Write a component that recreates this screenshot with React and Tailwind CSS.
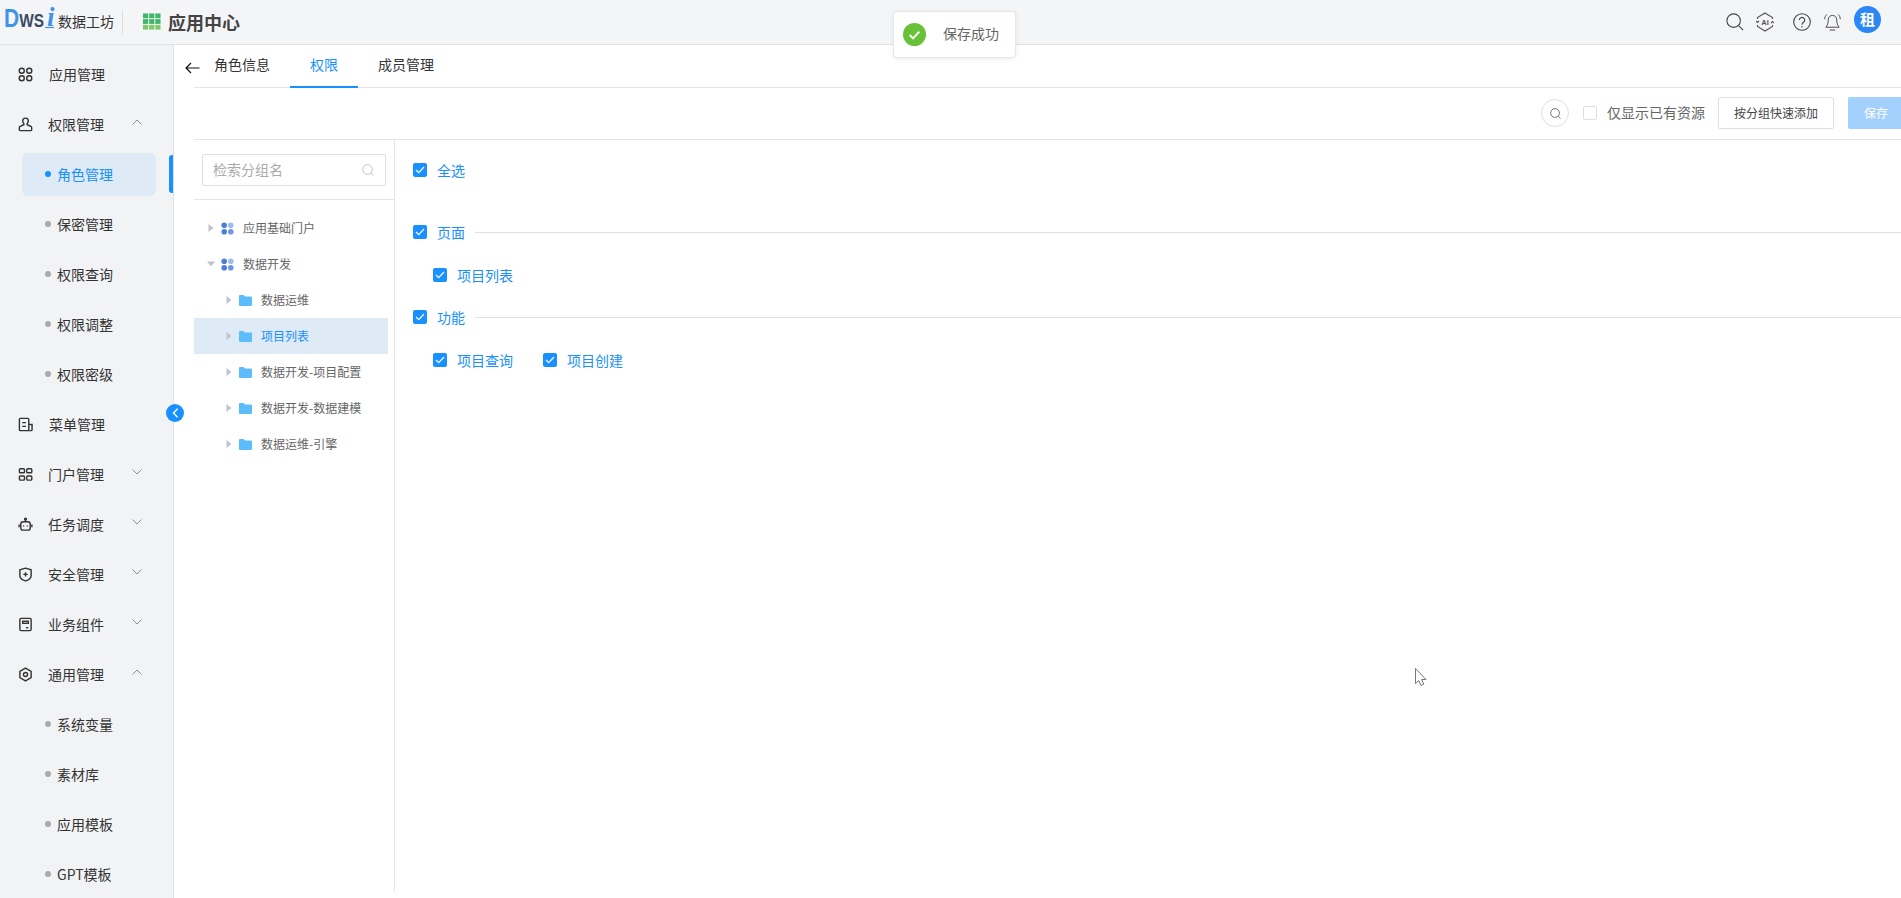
import React from "react";

const FONT = "font-['Noto_Sans_CJK_SC','Noto_Sans',sans-serif]";

const MENU_ICONS = {
  apps: (
    <>
      <circle cx="4" cy="4" r="2.7" />
      <circle cx="12" cy="4" r="2.7" />
      <circle cx="4" cy="12" r="2.7" />
      <circle cx="12" cy="12" r="2.7" />
    </>
  ),
  user: (
    <>
      <path d="M8 1.200a3 3 0 0 0-3 3c0 1.300.5 2 1.200 2.800v1.200L2.300 10c-.6.300-.9.800-.9 1.400v2.300a.8.8 0 0 0 .8.800h11.600a.8.800 0 0 0 .8-.8v-2.300c0-.6-.3-1.100-.9-1.400L9.800 8.200V7c.7-.8 1.200-1.500 1.200-2.800a3 3 0 0 0-3-3z" />
    </>
  ),
  menu: (
    <>
      <path d="M12 14.500H2.500a1 1 0 0 1-1-1v-11a1 1 0 0 1 1-1h8a1 1 0 0 1 1 1v12" />
      <path d="M11.500 8h3.500v5.500a1 1 0 0 1-1 1h-2" />
      <path d="M4.500 6h4M4.500 10h4" />
    </>
  ),
  portal: (
    <>
      <rect x="1.500" y="1.800" width="5.400" height="4.400" rx="1" />
      <rect x="9.300" y="1.800" width="5.400" height="4.400" rx="1" />
      <rect x="1.500" y="9.600" width="5.400" height="4.400" rx="1" />
      <rect x="9.300" y="9.600" width="5.400" height="4.400" rx="1" />
    </>
  ),
  robot: (
    <>
      <rect x="3" y="5" width="10" height="9" rx="2.400" />
      <circle cx="8" cy="2.200" r="1" />
      <path d="M8 3v2M1.200 8v3M14.800 8v3" />
      <path d="M6 9v1M10 9v1" />
    </>
  ),
  shield: (
    <>
      <path d="M8 1.200l6 1.800v6.200c0 2.800-3.600 4.800-6 5.600-2.400-.8-6-2.800-6-5.600V3z" />
      <path d="M8 5.600v4.600M5.700 7.900h4.600" />
    </>
  ),
  widget: (
    <>
      <rect x="2" y="1.500" width="12" height="13" rx="1.200" />
      <rect x="5" y="4.500" width="6" height="2.200" />
      <path d="M8.500 11.500H11" />
    </>
  ),
  gear: (
    <>
      <path d="M8 1.200l6 3.400v6.800l-6 3.400-6-3.400V4.600z" />
      <circle cx="8" cy="8" r="2.200" />
    </>
  ),
};

function MenuIcon({ name }) {
  return (
    <svg viewBox="0 0 16 16" fill="none" stroke="#333" strokeWidth="1.500" className="w-[15px] h-[15px] shrink-0">
      {MENU_ICONS[name]}
    </svg>
  );
}

function Chevron({ up }) {
  return (
    <svg viewBox="0 0 10 6" fill="none" stroke="#8a8f99" strokeWidth="1" className="w-[10px] h-[6px] shrink-0 mb-[4px]">
      <path d={up ? "M.5 5.500L5 1l4.500 4.500" : "M.5.500L5 5l4.500-4.500"} />
    </svg>
  );
}

function TopItem({ icon, label, chevron, wide }) {
  return (
    <div className="h-[50px] flex items-center pl-[18px]">
      <MenuIcon name={icon} />
      <span className={`text-[14px] text-[#333] ${wide ? "ml-[16px]" : "ml-[15px]"}`}>{label}</span>
      {chevron && (
        <span className="ml-[28px] flex">
          <Chevron up={chevron === "up"} />
        </span>
      )}
    </div>
  );
}

function SubItem({ label, active }) {
  if (active) {
    return (
      <div className="h-[50px] flex items-center relative">
        <div className="ml-[22px] w-[134px] h-[43px] rounded-[6px] bg-[#deeaf6] flex items-center pl-[23px]">
          <span className="w-[6px] h-[6px] rounded-full bg-[#1890ff] mr-[6px]"></span>
          <span className="text-[14px] text-[#1890ff]">{label}</span>
        </div>
        <div className="absolute left-[169px] top-[6px] w-[4px] h-[38px] rounded-l-[3px] bg-[#1890ff]"></div>
      </div>
    );
  }
  return (
    <div className="h-[50px] flex items-center pl-[45px]">
      <span className="w-[6px] h-[6px] rounded-full bg-[#a8aaae] mr-[6px]"></span>
      <span className="text-[14px] text-[#333]">{label}</span>
    </div>
  );
}

function Sidebar() {
  return (
    <aside className="w-[174px] shrink-0 bg-[#f2f3f5] border-r border-[#e0e1e4] pt-[4px] relative">
      <TopItem icon="apps" label="应用管理" wide />
      <TopItem icon="user" label="权限管理" chevron="up" />
      <SubItem label="角色管理" active />
      <SubItem label="保密管理" />
      <SubItem label="权限查询" />
      <SubItem label="权限调整" />
      <SubItem label="权限密级" />
      <TopItem icon="menu" label="菜单管理" wide />
      <TopItem icon="portal" label="门户管理" chevron="down" />
      <TopItem icon="robot" label="任务调度" chevron="down" />
      <TopItem icon="shield" label="安全管理" chevron="down" />
      <TopItem icon="widget" label="业务组件" chevron="down" />
      <TopItem icon="gear" label="通用管理" chevron="up" />
      <SubItem label="系统变量" />
      <SubItem label="素材库" />
      <SubItem label="应用模板" />
      <SubItem label="GPT模板" />
      <div className="absolute left-[166px] top-[359px] w-[18px] h-[18px] rounded-full bg-[#1890ff] flex items-center justify-center">
        <svg viewBox="0 0 8 12" fill="none" stroke="#fff" strokeWidth="1.600" className="w-[7px] h-[10px]">
          <path d="M6.500 1L1.500 6l5 5" />
        </svg>
      </div>
    </aside>
  );
}

function Logo() {
  return (
    <svg viewBox="0 0 54 44" className="w-[54px] h-[44px] shrink-0">
      <text x="0" y="27" fontWeight="700" fontFamily="Liberation Sans" textLength="40" lengthAdjust="spacingAndGlyphs">
        <tspan fontSize="26" fill="#3f94ea">D</tspan>
        <tspan fontSize="19" fill="#3c4a63">WS</tspan>
      </text>
      <text x="43" y="26" fontSize="27" fontStyle="italic" fontWeight="700" fontFamily="Liberation Serif" fill="#3f94ea">i</text>
      <path d="M41 27.500h9" stroke="#3f94ea" strokeWidth="1.200" />
    </svg>
  );
}

function Header() {
  return (
    <header className="h-[45px] shrink-0 bg-[#f4f5f7] border-b border-[#dfe0e3] flex items-center pl-[4px] pr-[20px]">
      <Logo />
      <span className="text-[14px] text-[#333] pb-[1px]">数据工坊</span>
      <span className="w-px h-[24px] bg-[#dddee1] ml-[8px]"></span>
      <svg viewBox="0 0 19 18" className="w-[18px] h-[18px] ml-[20px]">
        {[0, 6.500, 13].map((x) =>
          [0, 6, 12].map((y) => <rect key={`${x}-${y}`} x={x} y={y} width="5.500" height="5" fill={y === 12 ? "#7fc66d" : "#3fb56c"} />)
        )}
      </svg>
      <span className="text-[18px] font-bold text-[#444] ml-[7px]">应用中心</span>
      <div className="ml-auto flex items-center">
        <svg viewBox="0 0 20 20" fill="none" stroke="#444" strokeWidth="1.200" className="w-[18px] h-[18px]">
          <circle cx="8.500" cy="8.500" r="7.500" />
          <path d="M14 14l5 5" />
        </svg>
        <svg viewBox="0 0 18 20" fill="none" stroke="#555" strokeWidth="1.100" className="w-[18px] h-[20px] ml-[12px]">
          <path d="M1.500 7V5.500L9 1l7.500 4.500V7M1.500 13v1.500L9 19l7.500-4.500V13" />
          <path d="M0 9l1.500 1.500L3 9M15 11l1.500-1.500L18 11" />
          <text x="9" y="12.500" fontSize="7.500" fontWeight="700" textAnchor="middle" fill="#555" stroke="none" fontFamily="Liberation Sans">AI</text>
        </svg>
        <svg viewBox="0 0 18 18" fill="none" stroke="#444" strokeWidth="1.100" className="w-[18px] h-[18px] ml-[19px]">
          <circle cx="9" cy="9" r="8.300" />
          <path d="M6.300 7a2.700 2.700 0 1 1 4.200 2.300c-1 .7-1.500 1.200-1.500 2.400" />
          <path d="M9 13v1.300" />
        </svg>
        <svg viewBox="0 0 18 20" fill="none" stroke="#444" strokeWidth="1" className="w-[17px] h-[19px] ml-[13px]">
          <path d="M9 2.500a4.500 4.500 0 0 0-4.500 4.500c0 4-1 6-2.500 8h14c-1.500-2-2.500-4-2.500-8A4.500 4.500 0 0 0 9 2.500z" />
          <path d="M3 1.500C1.500 2.800.8 4.500.8 6.500M15 1.500c1.500 1.300 2.200 3 2.200 5M6 18h6" />
        </svg>
        <div className="w-[27px] h-[27px] rounded-full bg-[#2b86f6] text-white text-[15px] font-bold flex items-center justify-center ml-[13px] mb-[5px]">租</div>
      </div>
    </header>
  );
}

function Check({ className = "" }) {
  return (
    <span className={`w-[14px] h-[14px] rounded-[2px] bg-[#1890ff] flex items-center justify-center shrink-0 ${className}`}>
      <svg viewBox="0 0 10 8" fill="none" stroke="#fff" strokeWidth="1.200" className="w-[10px] h-[8px]">
        <path d="M1 4l2.700 2.700L9 1" />
      </svg>
    </span>
  );
}

function CheckRow({ label, indent, line, className = "" }) {
  return (
    <div className={`flex items-center ${indent ? "pl-[20px]" : ""} ${className}`}>
      <Check />
      <span className="text-[14px] text-[#1890ff] ml-[10px] leading-[20px] pb-[1px]">{label}</span>
      {line && <span className="flex-1 h-px bg-[#dfe0e4] ml-[10px]"></span>}
    </div>
  );
}

function Arrow({ down }) {
  return (
    <svg viewBox="0 0 8 8" className="w-[8px] h-[8px] shrink-0" fill="#c0c4cc">
      <path d={down ? "M0 1.500h8L4 6.500z" : "M1.500 0v8l5-4z"} />
    </svg>
  );
}

function GroupIcon() {
  return (
    <svg viewBox="0 0 13 13" className="w-[13px] h-[13px] shrink-0 ml-[6px]">
      <circle cx="3.200" cy="3.200" r="2.800" fill="#4d7fd6" />
      <circle cx="9.800" cy="3.200" r="2.800" fill="#9fbcf0" />
      <circle cx="3.200" cy="9.800" r="2.800" fill="#4d7fd6" />
      <circle cx="9.800" cy="9.800" r="2.800" fill="#6c97e6" />
    </svg>
  );
}

function FolderIcon() {
  return (
    <svg viewBox="0 0 13 11" className="w-[13px] h-[11px] shrink-0 ml-[6px]" fill="#5cbdfa">
      <path d="M0 1a1 1 0 0 1 1-1h3.500l1.500 1.500h6a1 1 0 0 1 1 1V10a1 1 0 0 1-1 1H1a1 1 0 0 1-1-1z" />
    </svg>
  );
}

function TreeRow({ label, level, open, selected }) {
  return (
    <div className={`h-[36px] flex items-center w-[194px] ${level ? "pl-[31px]" : "pl-[13px]"} ${selected ? "bg-[#deeaf6]" : ""}`}>
      <Arrow down={open} />
      {level ? <FolderIcon /> : <GroupIcon />}
      <span className={`text-[12px] ml-[9px] ${selected ? "text-[#1890ff]" : "text-[#666]"}`}>{label}</span>
    </div>
  );
}

function TreePane() {
  return (
    <div className="w-[201px] shrink-0 border-r border-[#e3e4e8]">
      <div className="h-[60px] border-b border-[#e3e4e8] pl-[8px] pt-[14px]">
        <div className="w-[184px] h-[32px] border border-[#dcdee2] rounded-[2px] flex items-center justify-between pl-[10px] pr-[11px]">
          <span className="text-[14px] text-[#aaa] pb-[2px]">检索分组名</span>
          <svg viewBox="0 0 12 12" fill="none" stroke="#c0c4cc" strokeWidth="1" className="w-[12px] h-[12px]">
            <circle cx="5.500" cy="5.500" r="4.800" />
            <path d="M9 9l2.500 2.500" />
          </svg>
        </div>
      </div>
      <div className="pt-[10px]">
        <TreeRow label="应用基础门户" />
        <TreeRow label="数据开发" open />
        <TreeRow label="数据运维" level={1} />
        <TreeRow label="项目列表" level={1} selected />
        <TreeRow label="数据开发-项目配置" level={1} />
        <TreeRow label="数据开发-数据建模" level={1} />
        <TreeRow label="数据运维-引擎" level={1} />
      </div>
    </div>
  );
}

function Main() {
  return (
    <main className="flex-1 min-w-0 pl-[20px] bg-white overflow-hidden flex flex-col">
      {/* tabs */}
      <div className="h-[43px] shrink-0 border-b border-[#e3e4e8] flex relative">
        <svg viewBox="0 0 15 12" fill="none" stroke="#111" strokeWidth="1.200" className="absolute left-[-9px] top-[17px] w-[15px] h-[12px]">
          <path d="M14.500 6H1M6 1L1 6l5 5" />
        </svg>
        <div className="w-[96px] h-[43px] flex items-center justify-center text-[14px] text-[#333] pb-[4px]">角色信息</div>
        <div className="w-[68px] h-[43px] flex items-center justify-center text-[14px] text-[#1890ff] border-b-2 border-[#1890ff] -mb-px pb-[2px]">权限</div>
        <div className="w-[96px] h-[43px] flex items-center justify-center text-[14px] text-[#333] pb-[4px]">成员管理</div>
      </div>
      {/* toolbar */}
      <div className="h-[52px] shrink-0 border-b border-[#e3e4e8] flex items-center justify-end mr-[-3px] pb-[1px]">
        <div className="w-[28px] h-[28px] rounded-full border border-[#dcdee6] flex items-center justify-center">
          <svg viewBox="0 0 12 12" fill="none" stroke="#666" strokeWidth="1" className="w-[11px] h-[11px]">
            <circle cx="5.500" cy="5.500" r="4.800" />
            <path d="M9 9l2.500 2.500" />
          </svg>
        </div>
        <span className="w-[14px] h-[14px] border border-[#dcdee2] rounded-[2px] ml-[14px]"></span>
        <span className="text-[14px] text-[#666] ml-[10px] pb-[2px]">仅显示已有资源</span>
        <div className="w-[116px] h-[32px] border border-[#dcdee6] rounded-[2px] flex items-center justify-center text-[12px] text-[#444] ml-[13px]">按分组快速添加</div>
        <div className="w-[56px] h-[32px] bg-[#a3d0fd] rounded-[2px] flex items-center justify-center text-[12px] text-white ml-[14px]">保存</div>
      </div>
      <div className="h-[751px] flex">
        <TreePane />
        <div className="flex-1 min-w-0 pl-[18px] pt-[20px]">
          <CheckRow label="全选" className="h-[20px]" />
          <CheckRow label="页面" line className="h-[20px] mt-[42px]" />
          <CheckRow label="项目列表" indent className="h-[20px] mt-[23px]" />
          <CheckRow label="功能" line className="h-[20px] mt-[22px]" />
          <div className="flex mt-[23px] h-[20px]">
            <CheckRow label="项目查询" indent />
            <CheckRow label="项目创建" className="ml-[30px]" />
          </div>
        </div>
      </div>
    </main>
  );
}

export default function App() {
  return (
    <div className={`w-full h-[898px] overflow-hidden flex flex-col relative bg-white ${FONT}`}>
      <Header />
      <div className="flex-1 min-h-0 flex">
        <Sidebar />
        <Main />
      </div>
      {/* toast */}
      <div className="absolute left-[893px] top-[11px] w-[123px] h-[47px] bg-white rounded-[4px] border border-[#e6e7ea] shadow-[0_1px_4px_rgba(0,0,0,0.08)] flex items-center pl-[9px]">
        <svg viewBox="0 0 24 24" className="w-[23px] h-[23px]">
          <circle cx="12" cy="12" r="12" fill="#67c23a" />
          <path d="M7 12.500l3.500 3.500L17 9" fill="none" stroke="#fff" strokeWidth="2" />
        </svg>
        <span className="text-[14px] text-[#666] ml-[17px] pb-[2px]">保存成功</span>
      </div>
      {/* mouse pointer caught in the screenshot */}
      <svg viewBox="0 0 13 18" fill="#fff" stroke="#666" strokeWidth="0.900" className="absolute left-[1415px] top-[668px] w-[13px] h-[18px]">
        <path d="M.5.500v15l3.200-3 2.300 5 2.800-1.300-2.200-4.700h4.400z" />
      </svg>
    </div>
  );
}
